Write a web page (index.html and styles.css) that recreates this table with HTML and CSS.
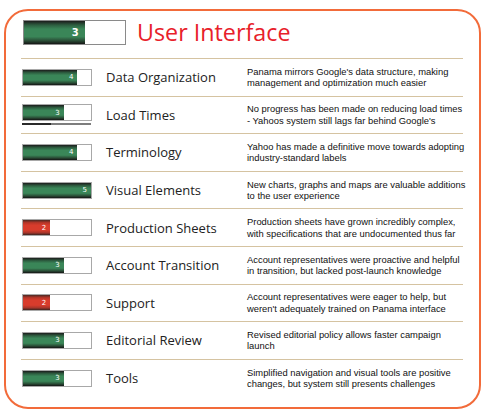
FILE: index.html
```html
<!DOCTYPE html>
<html lang="en">
<head>
  <meta charset="UTF-8">
  <title>User Interface</title>
  <link rel="stylesheet" href="styles.css">
</head>
<body>
  <div class="card">
    <div class="header">
      <div class="meter big">
        <div class="fill green" style="width: 60%"><span>3</span></div>
      </div>
      <h1>User Interface</h1>
    </div>

    <div class="row">
      <div class="meter"><div class="fill green" style="width: 80%"><span>4</span></div></div>
      <div class="label">Data Organization</div>
      <div class="desc">Panama mirrors Google's data structure, making<br>management and optimization much easier</div>
    </div>
    <div class="row">
      <div class="meter-wrap">
        <div class="meter"><div class="fill green" style="width: 60%"><span>3</span></div></div>
        <div class="lag"></div>
      </div>
      <div class="label">Load Times</div>
      <div class="desc">No progress has been made on reducing load times<br>- Yahoos system still lags far behind Google's</div>
    </div>
    <div class="row">
      <div class="meter"><div class="fill green" style="width: 80%"><span>4</span></div></div>
      <div class="label">Terminology</div>
      <div class="desc">Yahoo has made a definitive move towards adopting<br>industry-standard labels</div>
    </div>
    <div class="row">
      <div class="meter"><div class="fill green" style="width: 100%"><span>5</span></div></div>
      <div class="label">Visual Elements</div>
      <div class="desc">New charts, graphs and maps are valuable additions<br>to the user experience</div>
    </div>
    <div class="row">
      <div class="meter"><div class="fill red" style="width: 40%"><span>2</span></div></div>
      <div class="label">Production Sheets</div>
      <div class="desc">Production sheets have grown incredibly complex,<br>with specifications that are undocumented thus far</div>
    </div>
    <div class="row">
      <div class="meter"><div class="fill green" style="width: 60%"><span>3</span></div></div>
      <div class="label">Account Transition</div>
      <div class="desc">Account representatives were proactive and helpful<br>in transition, but lacked post-launch knowledge</div>
    </div>
    <div class="row">
      <div class="meter"><div class="fill red" style="width: 40%"><span>2</span></div></div>
      <div class="label">Support</div>
      <div class="desc">Account representatives were eager to help, but<br>weren't adequately trained on Panama interface</div>
    </div>
    <div class="row">
      <div class="meter"><div class="fill green" style="width: 60%"><span>3</span></div></div>
      <div class="label">Editorial Review</div>
      <div class="desc">Revised editorial policy allows faster campaign<br>launch</div>
    </div>
    <div class="row">
      <div class="meter"><div class="fill green" style="width: 60%"><span>3</span></div></div>
      <div class="label">Tools</div>
      <div class="desc">Simplified navigation and visual tools are positive<br>changes, but system still presents challenges</div>
    </div>
  </div>
</body>
</html>
```

FILE: styles.css
```css
body {
  margin: 0;
  background: #fff;
  font-family: "Open Sans", "Liberation Sans", sans-serif;
}

.card {
  box-sizing: border-box;
  width: 477px;
  height: 400px;
  margin: 9px 0 0 4px;
  padding: 9px 16px 0 15px;
  border: 2px solid #f26b3a;
  border-radius: 24px;
}

.header {
  display: flex;
  align-items: center;
  gap: 11px;
  padding: 0 0 13px 2px;
  border-bottom: 1px solid #d5c3a1;
}

.header h1 {
  margin: 0;
  font-size: 23.3px;
  font-weight: normal;
  color: #e8202a;
  line-height: 25px;
}

.row {
  display: grid;
  grid-template-columns: 70px 127px 1fr;
  column-gap: 14px;
  align-items: center;
  height: 36.6px;
  padding-left: 1px;
  border-bottom: 1px solid #d5c3a1;
}

.row:last-child {
  border-bottom: none;
}

.meter {
  box-sizing: border-box;
  width: 70px;
  height: 17px;
  border: 1px solid #a8a8a8;
  background: #fff;
}

.meter.big {
  width: 103px;
  height: 25px;
  border-color: #8a8a8a;
}

.meter-wrap {
  display: flex;
  flex-direction: column;
  gap: 2px;
}

.lag {
  height: 2px;
  width: 69px;
  background: linear-gradient(to right, #2a2a2a 42%, #7d7d7d 42%);
}

.fill {
  height: 100%;
  display: flex;
  align-items: center;
  justify-content: flex-end;
}

.fill span {
  padding-right: 4px;
  font-family: "DejaVu Sans", sans-serif;
  font-size: 7px;
  color: #fff;
}

.meter.big .fill span {
  padding-right: 6px;
  font-size: 10px;
  font-weight: bold;
}

.fill.green {
  background: linear-gradient(to bottom, #1c1c1c 0%, #2d5e40 18%, #3a8658 35%, #3a8658 68%, #2a4f37 85%, #151515 100%);
}

.fill.red {
  background: linear-gradient(to bottom, #4a2a24 0%, #b83528 18%, #d83c2c 35%, #d83c2c 68%, #a8352a 85%, #3a2420 100%);
}

.label {
  font-size: 13px;
  color: #222;
  white-space: nowrap;
}

.desc {
  font-family: "Liberation Sans", Arial, sans-serif;
  font-size: 9.4px;
  line-height: 11.5px;
  color: #111;
  white-space: nowrap;
}
```
